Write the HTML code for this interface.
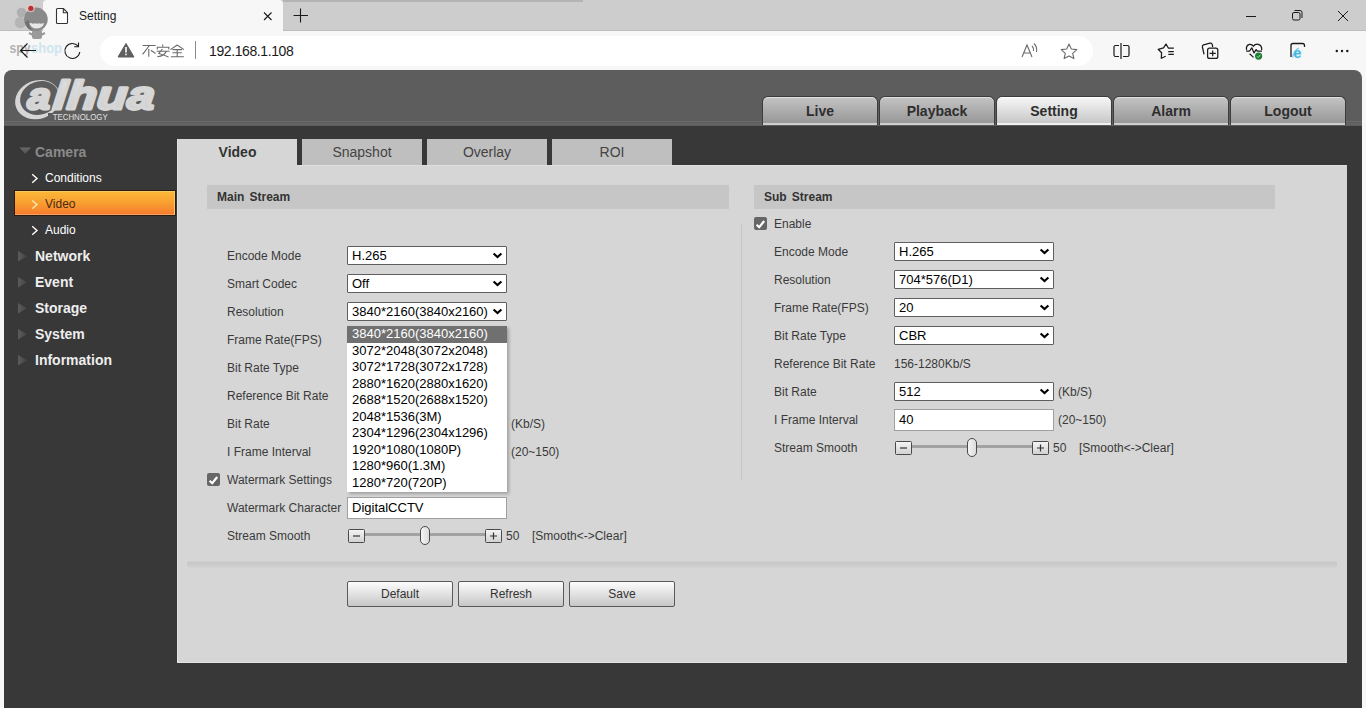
<!DOCTYPE html>
<html><head><meta charset="utf-8">
<style>
*{margin:0;padding:0;box-sizing:border-box}
html,body{width:1366px;height:708px;overflow:hidden;background:#f7f7f7;font-family:"Liberation Sans",sans-serif}
.a{position:absolute}
#tabstrip{left:0;top:0;width:1366px;height:31px;background:#cdcdcd;border-bottom:1px solid #bdbdbd}
#acttab{left:43px;top:0;width:240px;height:32px;background:#f7f7f7;border-radius:4px 4px 0 0}
#addrrow{left:0;top:31px;width:1366px;height:39px;background:#f7f7f7}
#addr{left:100px;top:36px;width:993px;height:30px;background:#fff;border-radius:15px}
#hdr{left:4px;top:70px;width:1358px;height:56px;background:#5d5d5d;border-radius:8px 8px 0 0}
#body{left:4px;top:126px;width:1358px;height:582px;background:#383838}
.ntab{top:96px;width:116px;height:29px;border:1px solid #3c3c3c;border-bottom:0;border-radius:6px 6px 0 0;background:linear-gradient(#c4c4c4,#949494);box-shadow:inset 0 1px 0 #e0e0e0,inset 0 -2px 0 #cfcfcf;font-weight:bold;font-size:14px;color:#2e2e2e;text-align:center;line-height:28px}
.ntab.on{background:linear-gradient(#f7f7f7,#c4c4c4);box-shadow:inset 0 1px 0 #fff,inset 0 -2px 0 #f0f0f0}
#panel{left:177px;top:165px;width:1170px;height:498px;background:#d6d6d6;border-left:1px solid #e2e2e2;border-bottom:1px solid #e2e2e2;border-top:1px solid #dedede}
.ctab{top:139px;width:120px;height:26px;background:#bfbfbf;font-size:14px;color:#444;text-align:center;line-height:26px}
.ctab.on{background:#d6d6d6;font-weight:bold;color:#333;height:27px;border-left:1px solid #e2e2e2}
.sep{top:139px;width:5px;height:26px;background:#383838}
.side{font-size:14px;font-weight:bold;color:#eee;left:35px}
.sub{font-size:12px;color:#fff;left:45px}
.lbl{font-size:12px;color:#3a3a3a;white-space:nowrap;margin-top:1px}
.sel{width:160px;height:19px;background:#fff;border:1px solid #5e5e5e;border-radius:1px;font-size:13px;color:#000;padding-left:4px;line-height:17px;white-space:nowrap}
.sel svg{position:absolute;right:3px;top:5px}
.inp{width:160px;height:22px;background:#fff;border:1px solid #a0a0a0;font-size:13px;color:#000;padding-left:4px;line-height:20px}
.bar{word-spacing:1.8px;height:24px;background:#c6c6c6;font-size:12px;font-weight:bold;color:#333;padding-left:10px;line-height:24px}
.btn{top:581px;width:106px;height:26px;border:1px solid #5a5a5a;border-radius:2px;background:linear-gradient(#fdfdfd,#c6c6c6);font-size:12px;color:#333;text-align:center;line-height:24px}
.chk{width:13px;height:13px;background:#666;border-radius:2px}
.sbtn{width:17px;height:14px;border:1px solid #4a4a4a;border-radius:1.5px;background:linear-gradient(#f4f4f4,#d2d2d2)}
.track{height:3px;background:#a2a2a2}
.thumb{width:10px;height:19px;border:1px solid #4a4a4a;border-radius:5px;background:linear-gradient(90deg,#f4f4f4,#dcdcdc)}
</style></head><body>
<div id="tabstrip" class="a"></div>
<div id="acttab" class="a"></div>
<div id="addrrow" class="a"></div>
<div id="addr" class="a"></div>

<svg class="a" style="left:0;top:0" width="1366" height="70" viewBox="0 0 1366 70">
<!-- new tab region darker top shadow -->
<rect x="283" y="0" width="300" height="2" fill="#b4b4b4"/>
<!-- favicon doc -->
<path d="M57.5 8.5 H63.3 L67.5 12.7 V22.5 Q67.5 23.5 66.5 23.5 H57.5 Q56.5 23.5 56.5 22.5 V9.5 Q56.5 8.5 57.5 8.5 Z" fill="#fff" stroke="#333" stroke-width="1.1" stroke-linejoin="round"/><path d="M63.3 8.5 V12.7 H67.5" fill="none" stroke="#333" stroke-width="1.1" stroke-linejoin="round"/>
<!-- tab close -->
<path d="M264 12.5 L271.5 20 M271.5 12.5 L264 20" stroke="#1a1a1a" stroke-width="1.1"/>
<!-- new tab plus -->
<path d="M293.5 15.5 H308 M300.5 8.5 V22.5" stroke="#1a1a1a" stroke-width="1.1"/>
<!-- window controls -->
<path d="M1246 16.5 H1256" stroke="#1a1a1a" stroke-width="1"/>
<rect x="1292.5" y="12.5" width="7.5" height="7.5" rx="1.5" fill="none" stroke="#1a1a1a" stroke-width="1"/>
<path d="M1294.5 10.5 H1300 Q1302 10.5 1302 12.5 V18" fill="none" stroke="#1a1a1a" stroke-width="1"/>
<path d="M1338 11 L1348 21 M1348 11 L1338 21" stroke="#1a1a1a" stroke-width="1"/>
<!-- spyshop watermark -->
<circle cx="21.5" cy="12.5" r="4.8" fill="#a9a9a9" opacity=".85"/>
<circle cx="20.5" cy="22.5" r="5.8" fill="#b0b0b0" opacity=".85"/>
<rect x="32" y="30" width="10" height="9" rx="2" fill="#9a9a9a"/>
<path d="M29 33 L33 35 M45 33 L41 35" stroke="#9a9a9a" stroke-width="2"/>
<circle cx="35.9" cy="19.3" r="11.8" fill="#8a8a8a"/>
<path d="M25 22 Q26 29 33 31 Q28 26 29 20 Z" fill="#707070"/>
<path d="M29.5 23.5 Q31 22.5 33 23.8 Q35 22.5 37 23.8 Q39 22.5 41 23.8 Q43 22.8 44.2 23.5 Q42 28.5 36.5 28.5 Q31.5 28.5 29.5 23.5 Z" fill="#e8e8e8"/>
<circle cx="30.8" cy="8.3" r="4" fill="#f0c8c8" opacity=".7"/>
<circle cx="30.8" cy="8.3" r="2.6" fill="#b83030"/>
<text x="9.5" y="53" font-family="Liberation Sans" font-size="14" font-weight="bold" fill="#b0b0b0" textLength="21" lengthAdjust="spacingAndGlyphs">spy</text>
<text x="31" y="53" font-family="Liberation Sans" font-size="14" font-weight="bold" fill="#cfe5ef" textLength="31" lengthAdjust="spacingAndGlyphs">shop</text>
<!-- back arrow -->
<path d="M36 50.5 H20.5 M27.5 43.5 L20.5 50.5 L27.5 57.5" fill="none" stroke="#1a1a1a" stroke-width="1.1"/>
<!-- reload -->
<path d="M78.2 46.2 A7.5 7.5 0 1 0 79.8 52" fill="none" stroke="#1a1a1a" stroke-width="1.1"/>
<path d="M78.5 42.5 V46.8 H74.2" fill="none" stroke="#1a1a1a" stroke-width="1.1"/>
<!-- warning triangle -->
<path d="M126 43.5 L134 57 H118 Z" fill="#5f5f5f" stroke="#5f5f5f" stroke-width="1" stroke-linejoin="round"/>
<rect x="125.2" y="47" width="1.6" height="5.5" fill="#fff"/>
<rect x="125.2" y="53.6" width="1.6" height="1.6" fill="#fff"/>
<!-- CJK 不安全 -->
<g fill="none" stroke="#6a6a6a" stroke-width="1.1">
<path d="M142.6 45.5 H155.7 M149.4 45.5 L142.6 54.3 M148.8 49 V56.8 M150.9 50.3 L155.5 53.5"/>
<path d="M162.7 44.6 V46.6 M157.3 49.5 V47.2 H168.8 V49.5 M156.6 51.3 H169.5 M162.4 49 L158.8 53.5 Q164 55 168.5 57 M166.2 51.5 Q164.5 55.8 157.3 56.8"/>
<path d="M177.2 45 L170.4 49.6 M177.2 45 L183.9 49.6 M172.5 49.6 H182 M172.4 52.7 H181.8 M170.9 56.7 H183.9 M177.2 49.6 V56.7"/>
</g>
<!-- separator -->
<rect x="195" y="41" width="1" height="18" fill="#8a8a8a"/>
<!-- read aloud A -->
<path d="M1022 57 L1027 45 L1032 57 M1023.8 53 H1030.2" fill="none" stroke="#6a6a6a" stroke-width="1.1"/>
<path d="M1032 46 Q1034 48 1033.5 51 M1034 43.5 Q1037.5 47 1036.5 52" fill="none" stroke="#6a6a6a" stroke-width="1.1"/>
<!-- star -->
<path d="M1069 44 L1071.3 49 L1076.8 49.6 L1072.7 53.3 L1073.9 58.6 L1069 55.9 L1064.1 58.6 L1065.3 53.3 L1061.2 49.6 L1066.7 49 Z" fill="none" stroke="#6a6a6a" stroke-width="1.1" stroke-linejoin="round"/>
<!-- split screen -->
<path d="M1119 45.5 H1115.5 Q1114 45.5 1114 47 V55 Q1114 56.5 1115.5 56.5 H1119 M1123 45.5 H1127.5 Q1129 45.5 1129 47 V55 Q1129 56.5 1127.5 56.5 H1123" fill="none" stroke="#1a1a1a" stroke-width="1.2"/>
<path d="M1121 43 V59" stroke="#1a1a1a" stroke-width="1.2"/>
<!-- favorites -->
<path d="M1173.8 48.2 H1168.5 L1166 44 L1163.5 47.9 L1158.2 49.3 L1161.6 52.7 L1161.3 58.3 L1165.7 56.2" fill="none" stroke="#1a1a1a" stroke-width="1.25" stroke-linejoin="round"/>
<path d="M1168.3 51.5 H1173.8 M1168.3 54.4 H1173.8" stroke="#1a1a1a" stroke-width="1.25"/>
<!-- collections -->
<path d="M1204.1 54.3 L1202.4 47 Q1202.1 45.3 1203.6 44.9 L1210 43.2 Q1211.9 42.9 1212.4 44.8 L1212.6 47" fill="none" stroke="#1a1a1a" stroke-width="1.25" stroke-linejoin="round"/>
<rect x="1207.6" y="48.2" width="10.2" height="10.2" rx="2" fill="#f7f7f7" stroke="#1a1a1a" stroke-width="1.25"/>
<path d="M1212.7 50.4 V56.3 M1209.6 53.4 H1215.8" stroke="#1a1a1a" stroke-width="1.2"/>
<!-- health -->
<path d="M1246.6 50 Q1245.6 45.5 1249.5 44.4 Q1251.8 44 1253.4 46.2 Q1255.2 43.8 1258.3 44.3 Q1262.2 45.3 1261.7 50" fill="none" stroke="#1a1a1a" stroke-width="1.25"/>
<path d="M1246.2 51 H1249.6 L1251.8 47.8 L1254 52.9 L1256.1 49.6 L1257.2 51 H1262" fill="none" stroke="#1a1a1a" stroke-width="1.25" stroke-linejoin="round"/>
<path d="M1249.6 53.8 L1253.6 57.4" stroke="#1a1a1a" stroke-width="1.25"/>
<circle cx="1258.6" cy="56.1" r="3.6" fill="#237c37"/>
<path d="M1256.9 56.2 L1258.2 57.5 L1260.4 54.9" fill="none" stroke="#9fe0a8" stroke-width="1"/>
<!-- IE mode -->
<path d="M1291 57 V45.5 Q1291 43.5 1293 43.5 H1302.5 Q1304.5 43.5 1304.5 45.5 V47" fill="none" stroke="#1a1a1a" stroke-width="1.3"/>
<text x="1293.5" y="57.5" font-family="Liberation Sans" font-weight="bold" font-size="14" fill="#3aaee0" stroke="#7fd3ee" stroke-width=".4">e</text><path d="M1292.5 57.5 Q1294 50 1299 48" fill="none" stroke="#5cc4ea" stroke-width="1.1"/>
<!-- dots -->
<circle cx="1336.8" cy="51" r="1.2" fill="#1a1a1a"/><circle cx="1342" cy="51" r="1.2" fill="#1a1a1a"/><circle cx="1347.3" cy="51" r="1.2" fill="#1a1a1a"/>
</svg>
<div class="a" style="left:79px;top:9px;font-size:12px;color:#1a1a1a">Setting</div>
<div class="a" style="left:209px;top:43px;font-size:14px;color:#1a1a1a;letter-spacing:-0.4px">192.168.1.108</div>

<div id="hdr" class="a"></div>
<div id="body" class="a"></div>
<div class="a" style="left:4px;top:121px;width:1358px;height:1px;background:#6a6a6a"></div>
<div class="a" style="left:4px;top:123px;width:1358px;height:2px;background:#646464"></div>
<svg class="a" style="left:0;top:70px" width="170" height="56" viewBox="0 70 170 56">
<defs><linearGradient id="lg" x1="0" y1="0" x2="0" y2="1"><stop offset="0" stop-color="#e2e2e2"/><stop offset="1" stop-color="#cdcdcd"/></linearGradient></defs>
<g transform="rotate(-20 38 99)">
<ellipse cx="37.5" cy="99.5" rx="23" ry="19.2" fill="#d6d6d6"/>
<ellipse cx="39.8" cy="98.6" rx="19.8" ry="16.5" fill="#5d5d5d"/>
</g>
<rect x="48" y="113" width="16" height="7.5" fill="#5d5d5d"/>
<g font-family="Liberation Sans" font-weight="bold" font-style="italic" fill="url(#lg)" stroke="#d6d6d6" stroke-width="3" stroke-linejoin="round">
<text transform="translate(27 108.5) skewX(-4) scale(1.1 1)" font-size="37">a</text>
<text transform="translate(52.5 108.5) skewX(-5) scale(1.22 1)" font-size="40" letter-spacing="0.2">lhua</text>
</g>
<text x="52.7" y="120" font-family="Liberation Sans" font-size="8.2" fill="#e0e0e0" textLength="55" lengthAdjust="spacingAndGlyphs">TECHNOLOGY</text>
</svg>

<div class="a ntab" style="left:762px">Live</div>
<div class="a ntab" style="left:879px">Playback</div>
<div class="a ntab on" style="left:996px">Setting</div>
<div class="a ntab" style="left:1113px">Alarm</div>
<div class="a ntab" style="left:1230px">Logout</div>

<!-- sidebar -->
<div class="a" style="left:15px;top:191px;width:160px;height:24px;background:linear-gradient(#fbb838,#f9a232 45%,#f67a2c);box-shadow:0 0 0 1px #2e1c0a,inset -1px 1px 0 #f3c868,inset 0 -1px 0 #f2a070"></div>
<svg class="a" style="left:0;top:125px" width="177" height="250" viewBox="0 125 177 250">
<defs><linearGradient id="tg" x1="0" y1="0" x2="1" y2="0"><stop offset="0" stop-color="#5c5c5c"/><stop offset="1" stop-color="#444"/></linearGradient>
<linearGradient id="tg2" x1="0" y1="0" x2="0" y2="1"><stop offset="0" stop-color="#6a6a6a"/><stop offset="1" stop-color="#4e4e4e"/></linearGradient></defs>
<path d="M19.5 147.5 H31 L25.2 154 Z" fill="url(#tg2)"/>
<path d="M32.2 174.3 L37 178.5 L32.2 182.7" fill="none" stroke="#fff" stroke-width="1.4"/>
<path d="M32.2 200.5 L37 204.6 L32.2 208.8" fill="none" stroke="#ffe3a8" stroke-width="1.4"/>
<path d="M32.2 226.3 L37 230.5 L32.2 234.7" fill="none" stroke="#fff" stroke-width="1.4"/>
<path d="M18 251 L27 256.3 L18 261.6 Z" fill="url(#tg)"/>
<path d="M18 277 L27 282.3 L18 287.6 Z" fill="url(#tg)"/>
<path d="M18 303 L27 308.3 L18 313.6 Z" fill="url(#tg)"/>
<path d="M18 329 L27 334.3 L18 339.6 Z" fill="url(#tg)"/>
<path d="M18 355 L27 360.3 L18 365.6 Z" fill="url(#tg)"/>
</svg>
<div class="a side" style="top:144px;color:#8a8a8a">Camera</div>
<div class="a sub" style="top:171px">Conditions</div>
<div class="a sub" style="top:197px;color:#4a2a10">Video</div>
<div class="a sub" style="top:223px">Audio</div>
<div class="a side" style="top:248px">Network</div>
<div class="a side" style="top:274px">Event</div>
<div class="a side" style="top:300px">Storage</div>
<div class="a side" style="top:326px">System</div>
<div class="a side" style="top:352px">Information</div>

<div id="panel" class="a"></div>
<div class="a ctab on" style="left:177px">Video</div>
<div class="a sep" style="left:297px"></div>
<div class="a ctab" style="left:302px">Snapshot</div>
<div class="a sep" style="left:422px"></div>
<div class="a ctab" style="left:427px">Overlay</div>
<div class="a sep" style="left:547px"></div>
<div class="a ctab" style="left:552px">ROI</div>

<div class="a bar" style="left:207px;top:185px;width:522px">Main Stream</div>
<div class="a bar" style="left:754px;top:185px;width:521px">Sub Stream</div>

<!-- main stream -->
<div class="a lbl" style="left:227px;top:248px">Encode Mode</div>
<div class="a lbl" style="left:227px;top:276px">Smart Codec</div>
<div class="a lbl" style="left:227px;top:304px">Resolution</div>
<div class="a lbl" style="left:227px;top:332px">Frame Rate(FPS)</div>
<div class="a lbl" style="left:227px;top:360px">Bit Rate Type</div>
<div class="a lbl" style="left:227px;top:388px">Reference Bit Rate</div>
<div class="a lbl" style="left:227px;top:416px">Bit Rate</div>
<div class="a lbl" style="left:227px;top:444px">I Frame Interval</div>
<div class="a lbl" style="left:227px;top:472px">Watermark Settings</div>
<div class="a lbl" style="left:227px;top:500px">Watermark Character</div>
<div class="a lbl" style="left:227px;top:528px">Stream Smooth</div>
<div class="a sel" style="left:347px;top:246px">H.265<svg width="11" height="8"><path d="M1.6 1.4 L5.5 5.1 L9.4 1.4" fill="none" stroke="#000" stroke-width="2.1"/></svg></div>
<div class="a sel" style="left:347px;top:274px">Off<svg width="11" height="8"><path d="M1.6 1.4 L5.5 5.1 L9.4 1.4" fill="none" stroke="#000" stroke-width="2.1"/></svg></div>
<div class="a sel" style="left:347px;top:302px">3840*2160(3840x2160)<svg width="11" height="8"><path d="M1.6 1.4 L5.5 5.1 L9.4 1.4" fill="none" stroke="#000" stroke-width="2.1"/></svg></div>
<div class="a lbl" style="left:511px;top:416px">(Kb/S)</div>
<div class="a lbl" style="left:511px;top:444px">(20~150)</div>
<div class="a chk" style="left:207px;top:473px"><svg width="13" height="13"><path d="M2.6 6.8 L5.2 9.2 L10.2 3" fill="none" stroke="#fff" stroke-width="2.2"/></svg></div>
<div class="a inp" style="left:347px;top:497px">DigitalCCTV</div>
<div class="a sbtn" style="left:348px;top:529px"><svg width="15" height="12" style="position:absolute;left:0;top:0"><path d="M4 6 H11" stroke="#333" stroke-width="1.2"/></svg></div>
<div class="a track" style="left:365px;top:533px;width:121px"></div>
<div class="a thumb" style="left:420px;top:526px"></div>
<div class="a sbtn" style="left:485px;top:529px"><svg width="15" height="12" style="position:absolute;left:0;top:0"><path d="M4 6 H11 M7.5 2.5 V9.5" stroke="#333" stroke-width="1.2"/></svg></div>
<div class="a lbl" style="left:506px;top:528px">50</div>
<div class="a lbl" style="left:532px;top:528px">[Smooth&lt;-&gt;Clear]</div>

<!-- dropdown -->
<div class="a" style="left:347px;top:326px;width:160px;height:166px;background:#fff;box-shadow:2px 2px 3px rgba(0,0,0,.25);font-size:13px;color:#000;line-height:16.5px">
<div style="background:#707070;color:#fff;padding-left:5px">3840*2160(3840x2160)</div>
<div style="padding-left:5px">3072*2048(3072x2048)</div>
<div style="padding-left:5px">3072*1728(3072x1728)</div>
<div style="padding-left:5px">2880*1620(2880x1620)</div>
<div style="padding-left:5px">2688*1520(2688x1520)</div>
<div style="padding-left:5px">2048*1536(3M)</div>
<div style="padding-left:5px">2304*1296(2304x1296)</div>
<div style="padding-left:5px">1920*1080(1080P)</div>
<div style="padding-left:5px">1280*960(1.3M)</div>
<div style="padding-left:5px">1280*720(720P)</div>
</div>

<!-- divider lines -->
<div class="a" style="left:741px;top:224px;width:1px;height:256px;background:#c6c6c6"></div>
<div class="a" style="left:187px;top:561px;width:1150px;height:7px;background:linear-gradient(#d2d2d2,#c7c7c7 25%,#cfcfcf 80%,#d4d4d4);border-radius:3px"></div>

<!-- sub stream -->
<div class="a chk" style="left:754px;top:217px"><svg width="13" height="13"><path d="M2.6 6.8 L5.2 9.2 L10.2 3" fill="none" stroke="#fff" stroke-width="2.2"/></svg></div>
<div class="a lbl" style="left:774px;top:216px">Enable</div>
<div class="a lbl" style="left:774px;top:244px">Encode Mode</div>
<div class="a lbl" style="left:774px;top:272px">Resolution</div>
<div class="a lbl" style="left:774px;top:300px">Frame Rate(FPS)</div>
<div class="a lbl" style="left:774px;top:328px">Bit Rate Type</div>
<div class="a lbl" style="left:774px;top:356px">Reference Bit Rate</div>
<div class="a lbl" style="left:774px;top:384px">Bit Rate</div>
<div class="a lbl" style="left:774px;top:412px">I Frame Interval</div>
<div class="a lbl" style="left:774px;top:440px">Stream Smooth</div>
<div class="a sel" style="left:894px;top:242px">H.265<svg width="11" height="8"><path d="M1.6 1.4 L5.5 5.1 L9.4 1.4" fill="none" stroke="#000" stroke-width="2.1"/></svg></div>
<div class="a sel" style="left:894px;top:270px">704*576(D1)<svg width="11" height="8"><path d="M1.6 1.4 L5.5 5.1 L9.4 1.4" fill="none" stroke="#000" stroke-width="2.1"/></svg></div>
<div class="a sel" style="left:894px;top:298px">20<svg width="11" height="8"><path d="M1.6 1.4 L5.5 5.1 L9.4 1.4" fill="none" stroke="#000" stroke-width="2.1"/></svg></div>
<div class="a sel" style="left:894px;top:326px">CBR<svg width="11" height="8"><path d="M1.6 1.4 L5.5 5.1 L9.4 1.4" fill="none" stroke="#000" stroke-width="2.1"/></svg></div>
<div class="a lbl" style="left:894px;top:356px">156-1280Kb/S</div>
<div class="a sel" style="left:894px;top:382px">512<svg width="11" height="8"><path d="M1.6 1.4 L5.5 5.1 L9.4 1.4" fill="none" stroke="#000" stroke-width="2.1"/></svg></div>
<div class="a lbl" style="left:1058px;top:384px">(Kb/S)</div>
<div class="a inp" style="left:894px;top:409px">40</div>
<div class="a lbl" style="left:1058px;top:412px">(20~150)</div>
<div class="a sbtn" style="left:895px;top:441px"><svg width="15" height="12" style="position:absolute;left:0;top:0"><path d="M4 6 H11" stroke="#333" stroke-width="1.2"/></svg></div>
<div class="a track" style="left:912px;top:445px;width:121px"></div>
<div class="a thumb" style="left:967px;top:438px"></div>
<div class="a sbtn" style="left:1032px;top:441px"><svg width="15" height="12" style="position:absolute;left:0;top:0"><path d="M4 6 H11 M7.5 2.5 V9.5" stroke="#333" stroke-width="1.2"/></svg></div>
<div class="a lbl" style="left:1053px;top:440px">50</div>
<div class="a lbl" style="left:1079px;top:440px">[Smooth&lt;-&gt;Clear]</div>

<!-- buttons -->
<div class="a btn" style="left:347px">Default</div>
<div class="a btn" style="left:458px">Refresh</div>
<div class="a btn" style="left:569px">Save</div>

</body></html>
